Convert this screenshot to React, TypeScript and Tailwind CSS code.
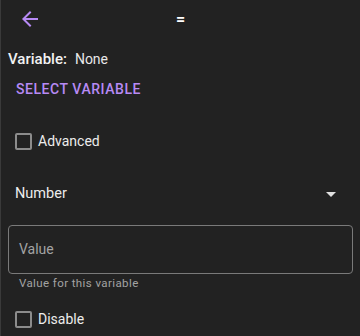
import React from "react";

function Checkbox({ label }: { label: string }) {
  return (
    <label className="flex items-center h-[24px] pl-[14px]">
      <span className="w-[17px] h-[17px] rounded-[2px] border-2 border-[#8c8c8c]" />
      <span className="ml-[6px] text-[14px] text-[#ececec]">{label}</span>
    </label>
  );
}

export default function App() {
  return (
    <div
      className="w-[360px] h-[336px] bg-[#222222] border-l border-[#3a3a3a] overflow-hidden"
      style={{ fontFamily: "Roboto, 'Liberation Sans', sans-serif" }}
    >
      {/* Toolbar */}
      <div className="grid grid-cols-[60px_1fr_60px] items-center h-[38px]">
        <button className="pl-[17px] flex items-center">
          <svg width="24" height="24" viewBox="0 0 24 24" fill="#b78af5">
            <path d="M20 11H7.83l5.59-5.59L12 4l-8 8 8 8 1.41-1.41L7.83 13H20v-2z" />
          </svg>
        </button>
        <div className="text-center text-[16px] font-bold text-white leading-none pt-[1px]">=</div>
        <div />
      </div>

      {/* Variable */}
      <div className="flex items-baseline pl-[7px] mt-[10px] h-[22px]">
        <span className="text-[15px] font-medium text-[#f2f2f2]">Variable:</span>
        <span className="ml-[8px] text-[14px] text-[#e8e8e8]">None</span>
      </div>

      <button className="ml-[15px] mt-[7px] h-[24px] text-[14px] font-medium tracking-[0.55px] text-[#b78af5]">
        SELECT VARIABLE
      </button>

      <div className="mt-[28px]">
        <Checkbox label="Advanced" />
      </div>

      {/* Type select */}
      <div className="flex items-center justify-between h-[26px] mt-[28px] pl-[14px] pr-[24px]">
        <span className="text-[14.5px] text-[#ececec]">Number</span>
        <svg width="10" height="5" viewBox="0 0 10 5" fill="#e0e0e0">
          <path d="M0 0h10L5 5z" />
        </svg>
      </div>

      {/* Value field */}
      <div className="mx-[7px] mt-[18px] h-[49px] rounded-[4px] border border-[#7a7a7a] flex items-center pl-[10px]">
        <span className="text-[14px] text-[#a3a3a3]">Value</span>
      </div>
      <div className="pl-[18px] mt-[1px] text-[11.5px] tracking-[0.4px] text-[#a3a3a3]">
        Value for this variable
      </div>

      <div className="mt-[15px]">
        <Checkbox label="Disable" />
      </div>
    </div>
  );
}
